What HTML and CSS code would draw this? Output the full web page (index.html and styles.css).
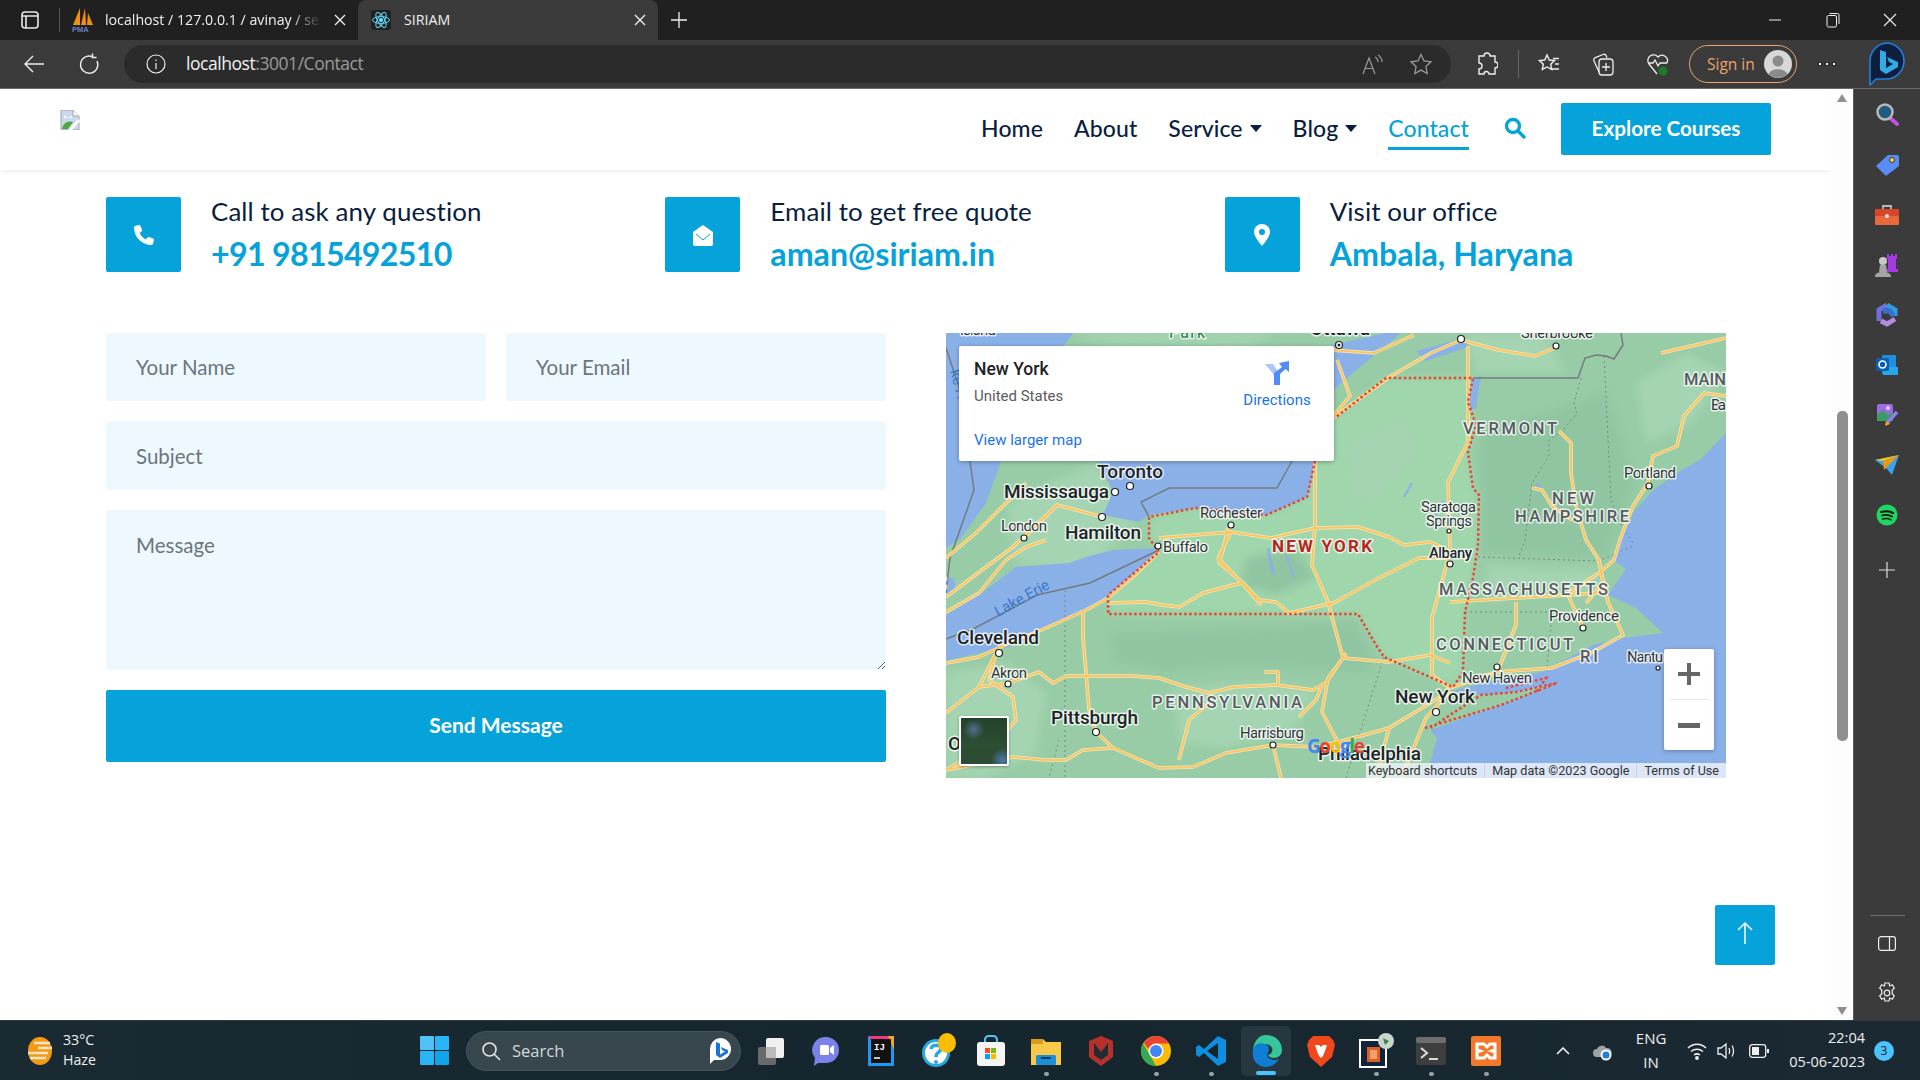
FILE: index.html
```html
<!DOCTYPE html>
<html lang="en">
<head>
<meta charset="utf-8">
<title>SIRIAM</title>
<link rel="stylesheet" href="styles.css">
</head>
<body>
<div class="tabstrip">
  <div class="tabs-btn"><svg width="20" height="20" viewBox="0 0 20 20" fill="none" stroke="#e8e8e8" stroke-width="1.6"><rect x="2" y="2" width="16" height="16" rx="3"/><path d="M2 6h16M6 6v12"/></svg></div>
  <div class="tab">
    <svg class="fav" width="22" height="26" viewBox="0 0 22 26"><path d="M1 18 8 1v17zM9 18l4-17 1 17zM15 18l1-12 5 12z" fill="#f29111"/><text class="pma" x="0" y="25">PMA</text></svg>
    <span class="tab-title fade">localhost / 127.0.0.1 / avinay / se</span>
    <svg class="tab-x" width="12" height="12" viewBox="0 0 12 12" stroke="#eee" stroke-width="1.4"><path d="M1 1l10 10M11 1 1 11"/></svg>
  </div>
  <div class="tab active">
    <svg class="fav" width="20" height="20" viewBox="0 0 20 20" fill="none" stroke="#61dafb"><rect width="20" height="20" rx="3" fill="#222" stroke="none"/><ellipse cx="10" cy="10" rx="8.5" ry="3.4"/><ellipse cx="10" cy="10" rx="8.5" ry="3.4" transform="rotate(60 10 10)"/><ellipse cx="10" cy="10" rx="8.5" ry="3.4" transform="rotate(120 10 10)"/><circle cx="10" cy="10" r="1.7" fill="#61dafb"/></svg>
    <span class="tab-title">SIRIAM</span>
    <svg class="tab-x" width="12" height="12" viewBox="0 0 12 12" stroke="#eee" stroke-width="1.4"><path d="M1 1l10 10M11 1 1 11"/></svg>
  </div>
  <div class="new-tab"><svg width="18" height="18" viewBox="0 0 18 18" stroke="#eee" stroke-width="1.3"><path d="M9 1v16M1 9h16"/></svg></div>
  <div class="win-btns">
    <div class="win-btn"><svg width="14" height="14" viewBox="0 0 14 14" stroke="#eee"><path d="M1 7h12"/></svg></div>
    <div class="win-btn"><svg width="14" height="16" viewBox="0 0 14 16" fill="none" stroke="#eee"><rect x="1" y="3.5" width="9.5" height="11.5" rx="1.5"/><path d="M3.5 1.5h8a1.5 1.5 0 0 1 1.5 1.5v9"/></svg></div>
    <div class="win-btn"><svg width="14" height="14" viewBox="0 0 14 14" stroke="#eee" stroke-width="1.1"><path d="M1 1l12 12M13 1 1 13"/></svg></div>
  </div>
</div>

<div class="toolbar">
  <div class="tool first"><svg width="22" height="20" viewBox="0 0 22 20" fill="none" stroke="#eee" stroke-width="1.4"><path d="M21 10H2M10 2l-8 8 8 8"/></svg></div>
  <div class="tool"><svg width="22" height="22" viewBox="0 0 22 22" fill="none" stroke="#eee" stroke-width="1.4"><path d="M14 3.5A8.6 8.6 0 1 0 19 8M14.500 0.500v4h4"/></svg></div>
  <div class="address">
    <div class="addr-icon"><svg width="20" height="20" viewBox="0 0 20 20" fill="none" stroke="#eee" stroke-width="1.2"><circle cx="10" cy="10" r="9"/><path d="M10 9v6M10 5.500v1.500"/></svg></div>
    <div class="url"><span class="url-host">localhost</span><span class="url-rest">:3001/Contact</span></div>
    <div class="tool narrow"><svg width="22" height="22" viewBox="0 0 22 22" fill="none" stroke="#9a9a9a" stroke-width="1.2"><path d="M2 21 8 5l6 16M4 15.500h8M14 4c2 1 3 3 3 5M17 2c2.500 1.500 4 4 4 7"/></svg></div>
    <div class="tool narrow"><svg width="22" height="22" viewBox="0 0 22 22" fill="none" stroke="#9a9a9a" stroke-width="1.3"><path d="m11 1.500 3 6.400 7 .9-5.100 4.800 1.300 6.900-6.200-3.400-6.200 3.400 1.300-6.900L1 8.800l7-.9z"/></svg></div>
  </div>
  <div class="tool ext"><svg width="22" height="24" viewBox="0 0 22 24" fill="none" stroke="#eee" stroke-width="1.4"><path d="M8 4a3 3 0 0 1 6 0h5v6a3 3 0 0 1 0 6v6h-6a2.500 2.500 0 0 0-5 0H3v-5a3 3 0 0 0 0-6V4z"/></svg></div>
  <div class="tool-sep"></div>
  <div class="tool"><svg width="22" height="24" viewBox="0 0 22 24" fill="none" stroke="#eee" stroke-width="1.4"><path d="m9 3 2.300 5 5.200.6-3.800 3.600 1 5.200L9 15l-4.700 2.400 1-5.200L1.500 8.600 6.700 8zM15 6.500h6M17 12h4M14 17h7"/></svg></div>
  <div class="tool"><svg width="24" height="26" viewBox="0 0 24 26" fill="none" stroke="#eee" stroke-width="1.3"><rect x="8" y="8" width="14" height="16" rx="3"/><path d="M15 12v8M11 16h8M8 21 3 10a2.500 2.500 0 0 1 1.300-3.300L12 3.500a2.500 2.500 0 0 1 3.200 1.300l.8 2"/></svg></div>
  <div class="tool"><svg width="24" height="26" viewBox="0 0 24 26" fill="none" stroke="#eee" stroke-width="1.3"><path d="M11 23 3 13a5.500 5.500 0 0 1 9-7 5.500 5.500 0 0 1 9 6M2 12h5l2-3 3 6 2-3h7"/><circle cx="17" cy="20" r="4.500" fill="#1f7a2a" stroke="none"/></svg></div>
  <div class="signin">
    <span>Sign in</span>
    <svg width="28" height="28" viewBox="0 0 28 28"><circle cx="14" cy="14" r="14" fill="#d8d8d8"/><circle cx="14" cy="11" r="5.500" fill="#8a8a8a"/><path d="M4.500 24a10 7 0 0 1 19 0 14 14 0 0 1-19 0z" fill="#8a8a8a"/></svg>
  </div>
  <div class="tool dots"><svg width="18" height="4" viewBox="0 0 18 4" fill="#f5f5f5"><circle cx="2" cy="2" r="1.800"/><circle cx="9" cy="2" r="1.800"/><circle cx="16" cy="2" r="1.800"/></svg></div>
  <div class="bing-top"><svg width="38" height="44" viewBox="0 0 38 44"><path d="M19 1a18 18 0 0 1 0 36H9l-6 6v-6 -18A18 18 0 0 1 19 1z" fill="#0d1f3c" stroke="#1f7fe0" stroke-width="1.600"/><path d="M13 8l6 2v16l7-4-4-2-2-5 11 5v5l-12 7-6-4z" fill="#33a9e8"/></svg></div>
</div>

<div class="middle">
  <main class="page">
    <header class="nav">
      <svg class="broken" width="20" height="20" viewBox="0 0 20 20"><path d="M1 0h12l6 6v14H1z" fill="#c8d8f0" stroke="#a5a5a5"/><path d="M13 0v6h6" fill="#fff" stroke="#a5a5a5"/><path d="M4 5l4 3 4-2v2H4z" fill="#fff"/><path d="M2 19c1-6 6-9 11-7l-5 7z" fill="#4fa83d"/><path d="M10 20 19 10" stroke="#fff" stroke-width="3"/></svg>
      <nav class="nav-links">
        <a class="nav-link">Home</a>
        <a class="nav-link">About</a>
        <a class="nav-link caret">Service</a>
        <a class="nav-link caret">Blog</a>
        <a class="nav-link current">Contact</a>
        <svg class="nav-search" width="22" height="22" viewBox="0 0 22 22" fill="none" stroke="#06a3da" stroke-width="3.400"><circle cx="9" cy="9" r="6.500"/><path d="m14 14 6 6" stroke-linecap="round"/></svg>
        <a class="explore">Explore Courses</a>
      </nav>
    </header>

    <section class="content">
      <div class="contacts">
        <div class="contact">
          <div class="contact-icon"><svg width="20" height="20" viewBox="0 0 512 512" fill="#fff"><path d="M164.900 24.600c-7.700-18.600-28-28.500-47.400-23.200l-88 24C12.100 30.200 0 46 0 64c0 247.400 200.600 448 448 448 18 0 33.800-12.100 38.600-29.500l24-88c5.300-19.400-4.600-39.700-23.200-47.400l-96-40c-16.300-6.800-35.200-2.100-46.300 11.600L304.700 368C234.300 334.700 177.300 277.700 144 207.300l49.300-40.300c13.700-11.200 18.400-30 11.600-46.300z"/></svg></div>
          <div class="contact-text"><h5 class="contact-label">Call to ask any question</h5><div class="contact-value phone">+91 9815492510</div></div>
        </div>
        <div class="contact">
          <div class="contact-icon"><svg width="22" height="22" viewBox="0 0 22 22"><path d="M11 1 21 8v12a2 2 0 0 1-2 2H3a2 2 0 0 1-2-2V8z" fill="#fff"/><path d="m4 10 7 6 7-6" fill="none" stroke="#06a3da"/></svg></div>
          <div class="contact-text"><h5 class="contact-label">Email to get free quote</h5><div class="contact-value">aman@siriam.in</div></div>
        </div>
        <div class="contact">
          <div class="contact-icon"><svg width="16" height="22" viewBox="0 0 16 22"><path d="M8 0a8 8 0 0 1 8 8c0 4-5 10.500-8 14-3-3.500-8-10-8-14a8 8 0 0 1 8-8z" fill="#fff"/><circle cx="8" cy="8" r="3" fill="#06a3da"/></svg></div>
          <div class="contact-text"><h5 class="contact-label">Visit our office</h5><div class="contact-value">Ambala, Haryana</div></div>
        </div>
      </div>

      <div class="split">
        <form class="form">
          <input class="field" type="text" placeholder="Your Name">
          <input class="field" type="email" placeholder="Your Email">
          <input class="field wide" type="text" placeholder="Subject">
          <textarea class="field wide message" placeholder="Message"></textarea>
          <button class="send wide" type="button">Send Message</button>
        </form>

        <div class="map">
          <svg class="map-svg" width="780" height="445" viewBox="0 0 780 445">
            <rect width="780" height="445" fill="#98cca6"/>
            <g class="tones">
              <path class="tone-ny" d="M440 45H527L522 69 530 92 522 119 527 155 533 162 532 212 527 245 519 279 517 339 507 354 438 324 430 312 412 281H162V262L213 219 203 205V184L249 175 320 182 361 164 369 128 389 85z"/>
              <path class="tone-dark" d="M165 300 300 295 410 290 430 325 420 340 300 332 220 338 170 330z"/>
              <path class="tone-dark" d="M535 100 660 60 690 150 660 225 535 220z"/>
              <path class="tone-light" d="M60 170 150 130 190 190 140 240 70 230z"/>
              <path class="tone-light" d="M225 355 330 350 370 358 350 395 280 415 235 410z"/>
              <path class="tone-light" d="M0 340 60 330 100 360 90 420 40 445H0z"/>
              <path class="tone-light" d="M400 110 460 85 470 120 430 170 405 165z"/>
              <path class="tone-light" d="M690 50 740 20 780 40 745 90 700 110z"/>
              <path class="tone-light" d="M120 0H330L300 12 160 10z"/>
              <path class="tone-light" d="M520 0 600 0 620 40 530 40z"/>
              <path class="tone-dark" d="M300 225 350 215 370 245 330 262 295 252z"/>
              <path class="tone-light" d="M540 232 650 237 655 258 540 265z"/>
            </g>
            <path class="water" d="M0 0H127L118 13V128H55L40 170 15 205 0 215z"/>
            <path class="water" d="M152 128H370L361 164 320 182 249 175 203 182 193 189 157 182 167 159z"/>
            <path class="water" d="M0 282 33 262 70 234 123 230 140 224 167 217 213 215V220L187 244 160 264 140 277 100 295 63 314 33 320 0 328z"/>
            <path class="water" d="M0 245H8L10 258 0 262z"/>
            <path class="water" d="M780 100 754 127 731 140 707 157 687 180 674 207 668 228 680 236 662 262 690 275 717 300 677 305 647 312 596 339 560 345 504 358 535 362 570 359 611 350 555 372 484 397 491 405 484 430 476 445H780z"/>
            <path class="water" d="M385 12 440 0 455 0 395 50 385 60z"/>
            <path class="water" d="M470 18 518 5 522 14 480 28z"/>
            <path class="water" d="M526 48 535 42 530 75 520 80z"/>
            <path class="lake" d="M322 215l4 25 2 0zM340 222l8 22zM497 168l-8 16M590 150l7 8M466 150l-8 14"/>
            <g class="state-line">
              <path d="M635 45 628 70 631 80 616 98 603 107V123L586 150 579 207 573 223"/>
              <path d="M658 23 665 167 674 190 687 210"/>
              <path d="M532 224 653 228 687 213"/>
              <path d="M519 279H606L601 335"/>
              <path d="M119 257V445M113 407 103 445M163 262V282"/>
              <path d="M438 324 420 380 400 445"/>
            </g>
            <g class="intl-line">
              <path d="M527 45H632L639 25 650 22 660 23 668 26 677 12 675 0"/>
              <path d="M346 128 331 155H223L195 169 203 184"/>
              <path d="M213 217 144 250 91 262 29 295 0 306"/>
              <path d="M0 15 15 60 24 128 28 157 4 225 0 260"/>
            </g>
            <defs>
              <g id="roads">
                <polyline points="213,219 187,244 162,265 140,277 100,295 63,310 33,324 0,330"/>
                <polyline points="162,270 200,269 217,272 233,274 257,260 287,252 297,250 313,267 330,269 343,280 387,270"/>
                <polyline points="297,250 273,230 277,217 282,195"/>
                <polyline points="213,205 285,199 325,205 369,195 412,194 443,204 458,212 484,209 504,218"/>
                <polyline points="504,225 473,225 433,245 402,262 384,272"/>
                <polyline points="369,128 369,192 366,232 382,269 397,325 382,345 376,379 397,419"/>
                <polyline points="522,13 522,67 522,109 502,149 504,219 486,285 486,342 504,355"/>
                <polyline points="384,87 445,43 485,20 515,7 552,17 589,23 613,13"/>
                <polyline points="391,27 404,63 384,87"/>
                <polyline points="384,17 428,20 468,2"/>
                <polyline points="613,98 625,110 625,140 630,173 640,207 653,227 657,250 640,270"/>
                <polyline points="586,155 596,157 606,173 626,187"/>
                <polyline points="780,63 758,60 738,83 731,113 707,123 702,150 687,173 674,207 668,227 653,240 620,262"/>
                <polyline points="504,269 570,265 622,262 662,259"/>
                <polyline points="504,355 550,339 606,335 647,319 677,302 662,269 652,225"/>
                <polyline points="570,269 570,292 553,335"/>
                <polyline points="637,295 622,262"/>
                <polyline points="0,380 33,354 63,350 93,339 107,350 120,343 187,343 213,345 240,354 263,360 287,354 330,352 367,357 380,350 400,320"/>
                <polyline points="318,339 332,339 332,352"/>
                <polyline points="137,277 137,304 140,340 143,377 150,399 167,415"/>
                <polyline points="0,437 67,424 100,427 120,427 137,417 167,415 213,435 247,434 280,420 327,412 370,414 400,407 443,395 504,358"/>
                <polyline points="233,427 243,387 263,370"/>
                <polyline points="353,384 370,367 377,350"/>
                <polyline points="50,320 43,347 67,364 70,387 53,407 0,437"/>
                <polyline points="0,279 33,260 60,227 80,214 100,207"/>
                <polyline points="0,264 40,234 67,214 111,172 157,184"/>
                <polyline points="397,325 443,329 484,322 504,330"/>
                <polyline points="272,225 295,249 315,272"/>
                <polyline points="285,199 272,225"/>
                <polyline points="327,412 335,445"/>
                <polyline points="0,225 30,200 80,150"/>
                <polyline points="78,205 111,172"/>
                <polyline points="715,20 780,5"/>
                <polyline points="504,358 480,385 455,445"/>
                <polyline points="443,395 430,445"/>
                <polyline points="33,354 50,320"/>
              </g>
            </defs>
            <use href="#roads" class="road-case"/>
            <use href="#roads" class="road-core"/>
            <path class="ny-line" d="M369 128 361 164 320 182 249 175 203 184V205L213 219 162 262V281H412L430 312 438 324 507 354 517 339 519 279 527 245 532 212 533 162 527 155 522 119 530 92 522 69 527 45H440L389 85"/>
            <path class="ny-line" d="M479 395 555 372 611 350 570 359 535 362 504 382 485 395M560 355 600 345 590 360"/>
            <g class="labels">
              <text class="lab" x="14" y="2" textLength="36">Island</text>
              <text class="lab green" x="223" y="5" textLength="36">Park</text>
              <text class="lab big" x="364" y="2" textLength="60">Ottawa</text>
              <text class="lab" x="575" y="5" textLength="72">Sherbrooke</text>
              <text class="lab big" x="151" y="145" textLength="66">Toronto</text>
              <text class="lab big" x="58" y="165" textLength="105">Mississauga</text>
              <text class="lab big" x="119" y="206" textLength="76">Hamilton</text>
              <text class="lab" x="55" y="198" textLength="46">London</text>
              <text class="lab" x="254" y="185" textLength="62">Rochester</text>
              <text class="lab" x="217" y="219" textLength="45">Buffalo</text>
              <text class="lab" x="475" y="179" textLength="55">Saratoga</text>
              <text class="lab" x="480" y="193" textLength="46">Springs</text>
              <text class="lab mid" x="483" y="225" textLength="43">Albany</text>
              <text class="lab big" x="11" y="311" textLength="82">Cleveland</text>
              <text class="lab" x="45" y="345" textLength="36">Akron</text>
              <text class="lab big" x="105" y="391" textLength="87">Pittsburgh</text>
              <text class="lab" x="294" y="405" textLength="64">Harrisburg</text>
              <text class="lab big" x="449" y="370" textLength="80">New York</text>
              <text class="lab big" x="372" y="427" textLength="103">Philadelphia</text>
              <text class="lab" x="516" y="350" textLength="70">New Haven</text>
              <text class="lab" x="603" y="288" textLength="70">Providence</text>
              <text class="lab" x="678" y="145" textLength="52">Portland</text>
              <text class="lab" x="681" y="329" textLength="36">Nantu</text>
              <text class="lab" x="765" y="77" textLength="15">Ba</text>
              <text class="lab big" x="-6" y="255">t</text>
              <text class="lab big" x="2" y="417">O</text>
              <text class="lab red" x="326" y="219" textLength="100">NEW YORK</text>
              <text class="lab st" x="517" y="101" textLength="94">VERMONT</text>
              <text class="lab st" x="606" y="171" textLength="42">NEW</text>
              <text class="lab st" x="569" y="189" textLength="114">HAMPSHIRE</text>
              <text class="lab st" x="493" y="262" textLength="169">MASSACHUSETTS</text>
              <text class="lab st" x="490" y="317" textLength="137">CONNECTICUT</text>
              <text class="lab st" x="634" y="329" textLength="18">RI</text>
              <text class="lab st" x="206" y="375" textLength="150">PENNSYLVANIA</text>
              <text class="lab st" x="738" y="52">MAIN</text>
              <text class="lab blue" transform="translate(52 284) rotate(-29)" textLength="60">Lake Erie</text>
              <text class="lab blue" transform="translate(4 38) rotate(75)">ke H</text>
              <text class="logo-g" x="361" y="420" textLength="58"><tspan class="g-b">G</tspan><tspan class="g-r">o</tspan><tspan class="g-y">o</tspan><tspan class="g-b">g</tspan><tspan class="g-gr">l</tspan><tspan class="g-r">e</tspan></text>
            </g>
            <g class="dots">
              <circle cx="393" cy="12" r="3.500"/><circle cx="515" cy="6" r="3.500"/><circle cx="610" cy="13" r="3"/><circle cx="184" cy="153" r="3.500"/><circle cx="169" cy="159" r="3.500"/><circle cx="156" cy="184" r="3.500"/><circle cx="78" cy="205" r="3"/><circle cx="212" cy="213" r="3"/><circle cx="285" cy="192" r="3"/><circle cx="504" cy="231" r="3"/><circle cx="503" cy="198" r="2"/><circle cx="703" cy="153" r="3"/><circle cx="637" cy="295" r="3"/><circle cx="551" cy="334" r="3"/><circle cx="490" cy="379" r="3.500"/><circle cx="53" cy="320" r="3.500"/><circle cx="62" cy="351" r="3"/><circle cx="150" cy="399" r="3.500"/><circle cx="327" cy="412" r="3"/><circle cx="712" cy="335" r="2"/>
            </g>
            <circle class="dot-core" cx="393" cy="12" r="1.500"/>
          </svg>

          <div class="map-card">
            <div class="map-card-main">
              <div class="place">New York</div>
              <div class="country">United States</div>
            </div>
            <a class="directions">
              <svg width="24" height="24" viewBox="0 0 24 24"><path d="M0 3h8l7 10v11H9V14z" fill="#a9c7fa"/><path d="M9 24V12L17 6 14 2 24 0v11l-3.500-3-5.500 5v11z" fill="#4f8cf5"/></svg>
              <span>Directions</span>
            </a>
            <a class="larger">View larger map</a>
          </div>

          <div class="map-thumb"></div>

          <div class="zoom-box">
            <div class="zoom-btn"><svg width="24" height="24" viewBox="0 0 24 24" fill="#666"><path d="M10 1h4v9h9v4h-9v9h-4v-9H1v-4h9z"/></svg></div>
            <div class="zoom-sep"></div>
            <div class="zoom-btn"><svg width="24" height="24" viewBox="0 0 24 24" fill="#666"><path d="M1 10h22v5H1z"/></svg></div>
          </div>

          <div class="attrib">
            <span>Keyboard shortcuts</span><span>Map data ©2023 Google</span><span>Terms of Use</span>
          </div>
        </div>
      </div>
    </section>

    <a class="to-top"><svg width="18" height="24" viewBox="0 0 18 24" fill="none" stroke="#fff" stroke-width="1.500"><path d="M9 23V2M2 9l7-7 7 7"/></svg></a>
  </main>

  <div class="scrollbar">
    <i class="arrow-up"></i>
    <div class="thumb"></div>
    <i class="arrow-down"></i>
  </div>

  <aside class="sidebar">
    <div class="side-slot"><svg width="24" height="24" viewBox="0 0 24 24"><path d="m14 14 8 7" stroke="#c94fe0" stroke-width="4" stroke-linecap="round"/><circle cx="10" cy="9" r="7.500" fill="#1f5c84" stroke="#b8b8b8" stroke-width="2.500"/></svg></div>
    <div class="side-slot"><svg width="24" height="24" viewBox="0 0 24 24"><path d="M13 2h9a2 2 0 0 1 2 2v9L11 23 1 13z" fill="#5a8cf5"/><circle cx="17" cy="7" r="2.500" fill="#ffd23c" stroke="#333"/></svg></div>
    <div class="side-slot"><svg width="24" height="22" viewBox="0 0 24 22"><path d="M8 6V2h8v4" fill="none" stroke="#bbb" stroke-width="1.800"/><rect y="5" width="24" height="7" fill="#d8452c"/><rect y="12" width="24" height="9" rx="1" fill="#e9683c"/><circle cx="12" cy="12" r="2" fill="#ddd"/></svg></div>
    <div class="side-slot"><svg width="24" height="24" viewBox="0 0 24 24"><path d="M12 6h10v-5h-2v2h-2V1h-2v2h-2V1h-2zM13 6h8v10h2v3H11v-3h2z" fill="#a43be0"/><circle cx="8" cy="8" r="4" fill="#c8c8c8"/><path d="M5 12h6l1 7H4zM0 24c0-3 2-5 8-5s8 2 8 5z" fill="#a5a5a5"/></svg></div>
    <div class="side-slot"><svg width="22" height="24" viewBox="0 0 22 24" fill="none" stroke-width="5"><path d="M3 18V7l8-5" stroke="#6f6fe0"/><path d="M11 2l8 5v6" stroke="#2f9ce0"/><path d="M19 16l-8 5-6-3" stroke="#b58ae0"/><path d="M7 8h7l3 5" stroke="#3a6fd0"/></svg></div>
    <div class="side-slot"><svg width="22" height="22" viewBox="0 0 22 22"><rect x="6" y="1" width="14" height="19" rx="1" fill="#1f8fe0"/><rect x="7" y="13" width="15" height="8" fill="#28a8ea"/><rect y="4" width="13" height="13" rx="1.500" fill="#0a5fb0"/><circle cx="6.500" cy="10.500" r="3.500" fill="none" stroke="#fff" stroke-width="1.600"/></svg></div>
    <div class="side-slot"><svg width="24" height="24" viewBox="0 0 24 24"><rect x="2" y="1" width="16" height="17" rx="2" fill="#a06ae0"/><path d="M2 12l6-5 5 5 5-3v9H2z" fill="#3c9c68"/><circle cx="13" cy="5" r="2" fill="#e6d0ff"/><path d="M12 20 22 9" stroke="#8f7cf0" stroke-width="3.500"/><path d="M11 18l4 3-5 2z" fill="#f2a51a"/></svg></div>
    <div class="side-slot"><svg width="24" height="20" viewBox="0 0 24 20"><path d="M0 5 24 0 17 20 11 13z" fill="#3aa0f0"/><path d="M0 5l24-5-16 6z" fill="#f5c518"/><path d="M8 6l1 9 2-2 13-13z" fill="#e59b12"/></svg></div>
    <div class="side-slot"><svg width="22" height="22" viewBox="0 0 22 22" fill="none" stroke="#191414" stroke-linecap="round"><circle cx="11" cy="11" r="10.500" fill="#1ed760" stroke="none"/><path d="M5 8c4-1 9-1 12 1" stroke-width="2.200"/><path d="M6 11.500c3-1 7-.8 10 1" stroke-width="1.800"/><path d="M6.500 15c3-.8 6-.5 8.500.8" stroke-width="1.500"/></svg></div>
    <div class="side-slot plus"><svg width="16" height="16" viewBox="0 0 16 16" stroke="#ddd" stroke-width="1.200"><path d="M8 0v16M0 8h16"/></svg></div>
    <div class="side-bottom">
      <div class="side-sep"></div>
      <div class="side-slot"><svg width="18" height="15" viewBox="0 0 18 15" fill="none" stroke="#eee" stroke-width="1.200"><rect x=".6" y=".6" width="16.800" height="13.800" rx="2.500"/><path d="M11.500 .6v13.800"/></svg></div>
      <div class="side-slot"><svg width="20" height="22" viewBox="0 0 20 22" fill="none" stroke="#eee" stroke-width="1.200"><path d="M8 1h4l.7 3 2.600-1.200 2 3.400-2.200 2a7 7 0 0 1 0 3.600l2.200 2-2 3.400-2.600-1.200-.7 3H8l-.7-3-2.600 1.200-2-3.400 2.200-2a7 7 0 0 1 0-3.600l-2.200-2 2-3.400L7.300 4z"/><circle cx="10" cy="11" r="2.800"/></svg></div>
    </div>
  </aside>
</div>

<footer class="taskbar">
  <div class="weather">
    <svg width="30" height="30" viewBox="0 0 30 30"><ellipse cx="16" cy="15" rx="12" ry="14" fill="#f59a12"/><g stroke="#f2e5c8" stroke-width="2.500"><path d="M10 7h16M14 12h14M4 17h20M6 22h16"/></g></svg>
    <div class="weather-text"><span>33°C</span><span>Haze</span></div>
  </div>
  <svg class="win-logo" width="29" height="29" viewBox="0 0 29 29"><rect width="14" height="14" fill="#4fc3f7" rx="1"/><rect x="15" width="14" height="14" fill="#29b6f6" rx="1"/><rect y="15" width="14" height="14" fill="#29b6f6" rx="1"/><rect x="15" y="15" width="14" height="14" fill="#0ea5e9" rx="1"/></svg>
  <div class="search-pill">
    <svg width="20" height="20" viewBox="0 0 20 20" fill="none" stroke="#e5e5e5" stroke-width="1.600"><circle cx="8.500" cy="8.500" r="6.500"/><path d="m13 13 6 6"/></svg>
    <span>Search</span>
    <svg class="pill-b" width="24" height="28" viewBox="0 0 24 28"><path d="M12 1a11 11 0 0 1 0 22H6l-4 4V12A11 11 0 0 1 12 1z" fill="#fff"/><path d="M8 5l4 1.500v11l5-3-3-1.500-1-3 7 3v3l-8 5-4-3z" fill="#1c74d8"/></svg>
  </div>
  <div class="apps">
    <div class="app"><svg width="30" height="30" viewBox="0 0 30 30"><rect x="2" y="11" width="18" height="18" rx="2" fill="#6a6a6a"/><rect x="10" y="2" width="18" height="20" rx="2" fill="#f0f0f0"/><rect x="10" y="11" width="10" height="11" fill="#bbb"/></svg></div>
    <div class="app"><svg width="28" height="30" viewBox="0 0 28 30"><path d="M14 1a13 13 0 0 1 0 26H6l-4 3 1-8A13 13 0 0 1 14 1z" fill="#7b83eb"/><rect x="8" y="9" width="9" height="10" rx="1.500" fill="#fff"/><path d="m18 12 4-3v10l-4-3z" fill="#fff"/></svg></div>
    <div class="app"><svg width="26" height="30" viewBox="0 0 26 30"><path d="M0 0h26v30H0z" fill="#2196f3"/><path d="M0 0h26L16 8H6z" fill="#ec3a7c"/><path d="M20 0h6v14z" fill="#f5a623"/><rect x="3" y="3" width="20" height="24" fill="#111"/><text class="ij" x="6" y="14">IJ</text><path d="M6 22h6" stroke="#fff" stroke-width="1.500"/></svg></div>
    <div class="app help"><svg width="34" height="36" viewBox="0 0 34 36"><circle cx="14" cy="20" r="14" fill="#29a8e0"/><circle cx="14" cy="20" r="11" fill="#fff"/><path d="M9 16c1-5 10-5 10 0 0 3-5 3-5 8" fill="none" stroke="#29a8e0" stroke-width="3.500"/><circle cx="14" cy="29" r="2" fill="#29a8e0"/><ellipse cx="25" cy="10" rx="9" ry="10" fill="#fbbc05"/></svg></div>
    <div class="app"><svg width="30" height="32" viewBox="0 0 30 32"><path d="M9 8V4a4 4 0 0 1 4-3h4a4 4 0 0 1 4 3v4" fill="none" stroke="#4fc3f7" stroke-width="2"/><rect x="1" y="7" width="28" height="24" rx="3" fill="#f4f4f4"/><rect x="9" y="13" width="5" height="5" fill="#f25022"/><rect x="15" y="13" width="5" height="5" fill="#7fba00"/><rect x="9" y="19" width="5" height="5" fill="#00a4ef"/><rect x="15" y="19" width="5" height="5" fill="#ffb900"/></svg></div>
    <div class="app dot"><svg width="32" height="28" viewBox="0 0 32 28"><path d="M1 2h12l3 3h15v23H1z" fill="#f7c948"/><path d="M1 2h12v5H1z" fill="#d99a1c"/><rect x="6" y="18" width="20" height="10" rx="1.500" fill="#1b8ed6"/><rect x="11" y="20" width="10" height="2" fill="#0b3f6b"/></svg></div>
    <div class="app"><svg width="26" height="30" viewBox="0 0 26 30"><path d="M1 5 13 0l12 5v16L13 30 1 21z" fill="#b7312c"/><path d="M6 7v12l7 5 7-5V7l-7 9z" fill="#202d35"/></svg></div>
    <div class="app dot"><svg width="30" height="30" viewBox="0 0 30 30"><circle cx="15" cy="15" r="15" fill="#fbbc05"/><path d="M15 0a15 15 0 0 1 13 7.500H15l-8 5L3 7A15 15 0 0 1 15 0z" fill="#ea4335"/><path d="M2 7.500 9 19l6 11A15 15 0 0 1 2 7.500z" fill="#34a853"/><circle cx="15" cy="15" r="7.500" fill="#fff"/><circle cx="15" cy="15" r="6" fill="#4285f4"/></svg></div>
    <div class="app dot"><svg width="30" height="30" viewBox="0 0 30 30"><path d="M22 0 30 4v22l-8 4-14-13-5 4-3-2V11l3-2 5 4z" fill="#0e8ee0"/><path d="M22 7v16L11 15z" fill="#17242c"/></svg></div>
    <div class="app active-app"><svg width="32" height="32" viewBox="0 0 32 32"><path d="M16 0c9 0 16 6 16 15 0 5-4 8-8 8-3 0-5-1-6-3 4-1 5-4 4-7-2-5-13-6-19 2C4 6 9 0 16 0z" fill="#35c69a"/><path d="M3 15C5 7 14 7 18 11c2 3 0 7-1 9 1 5 8 6 12 4-3 5-8 8-13 8C7 32 1 24 3 15z" fill="#0f7fd6"/></svg><b></b></div>
    <div class="app"><svg width="28" height="32" viewBox="0 0 28 32"><path d="M6 1h16l4 4 2 5-3 12-11 10L3 22 0 10l2-5z" fill="#f1471d"/><path d="M8 10h4l2 2 2-2h4l-2 6-2 5-2 2-2-2-2-5z" fill="#fff"/></svg></div>
    <div class="app dot badge-app"><svg width="36" height="36" viewBox="0 0 36 36"><rect x="1" y="6" width="28" height="29" fill="#fff"/><rect x="3" y="8" width="24" height="25" fill="#14233c"/><rect x="9" y="14" width="13" height="15" fill="#d9622b"/><rect x="12" y="17" width="7" height="9" fill="#f5a06b"/><circle cx="28" cy="8" r="8" fill="#c9d6cc"/><path d="M25 5l6 3-4 4z" fill="#3a7f4c"/></svg></div>
    <div class="app dot"><svg width="30" height="28" viewBox="0 0 30 28"><rect width="30" height="28" rx="2" fill="#3e3e3e"/><rect width="30" height="6" rx="2" fill="#6e6e6e"/><path d="m5 11 6 5-6 5" fill="none" stroke="#ddd" stroke-width="2"/><path d="M13 22h9" stroke="#ddd" stroke-width="2"/></svg></div>
    <div class="app dot"><svg width="30" height="30" viewBox="0 0 30 30"><rect width="30" height="30" rx="2" fill="#f4782c"/><path d="M6 8h7l3 3 3-3h5v6l-3 1 3 1v6h-5l-3-3-3 3H6v-6l3-1-3-1z" fill="none" stroke="#fff" stroke-width="3"/></svg></div>
  </div>
  <div class="tray">
    <svg class="tray-up" width="14" height="8" viewBox="0 0 14 8" fill="none" stroke="#eee" stroke-width="1.600"><path d="m1 7 6-6 6 6"/></svg>
    <svg class="tray-cloud" width="20" height="20" viewBox="0 0 20 20"><path d="M5 16a4 4 0 0 1 0-8 5 5 0 0 1 9-1 4 4 0 0 1 2 9z" fill="#9ea3a8"/><circle cx="14" cy="14" r="5.500" fill="#fff"/><circle cx="14" cy="14" r="3.500" fill="#1f7fd8"/></svg>
    <div class="lang"><span>ENG</span><span>IN</span></div>
    <svg class="tray-wifi" width="20" height="18" viewBox="0 0 20 18" fill="none" stroke="#eee" stroke-width="1.500"><path d="M1 6c5-5 13-5 18 0M4 9.500c3.500-3 8.500-3 12 0M7 13c2-1.500 4-1.500 6 0"/><circle cx="10" cy="16" r="1.200" fill="#eee"/></svg>
    <svg class="tray-vol" width="18" height="18" viewBox="0 0 18 18" fill="none" stroke="#eee" stroke-width="1.300"><path d="M1 6h3l5-4v14l-5-4H1zM12 6c1 2 1 4 0 6M15 3.500c2 3 2 8 0 11"/></svg>
    <svg class="tray-bat" width="20" height="14" viewBox="0 0 20 14"><rect x=".7" y=".7" width="16" height="12.600" rx="2.500" fill="none" stroke="#eee" stroke-width="1.300"/><rect x="3" y="3" width="7" height="8" fill="#eee"/><rect x="18" y="5" width="2" height="4" fill="#eee"/></svg>
    <div class="clock"><span>22:04</span><span>05-06-2023</span></div>
    <div class="notif">3</div>
  </div>
</footer>
</body>
</html>
```

FILE: styles.css
```css
* { box-sizing: border-box; }
html, body { margin: 0; padding: 0; height: 1080px; overflow: hidden; }
body { width: 1920px; display: flex; flex-direction: column; font-family: "Open Sans", "Noto Sans", sans-serif; background: #fff; }
svg { display: block; flex: none; }
a { text-decoration: none; color: inherit; }

/* browser chrome */
.tabstrip { height: 40px; flex: none; background: #202020; display: flex; color: #eee; font-size: 14.2px; }
.tabs-btn { width: 60px; height: 40px; display: flex; align-items: center; padding-left: 20px; }
.tabs-btn::after { content: ""; width: 1px; height: 24px; background: #555; margin-left: 19px; }
.tab { width: 298px; height: 40px; display: flex; align-items: center; padding-left: 12px; border-radius: 8px 8px 0 0; }
.tab.active { background: #3b3b3b; width: 300px; padding-left: 13px; }
.fav { margin-right: 11px; }
.tab.active .fav { margin-right: 13px; }
.tab-title { flex: 1; white-space: nowrap; overflow: hidden; color: #f0f0f0; padding-bottom: 2px; }
.fade { -webkit-mask-image: linear-gradient(90deg, #000 85%, transparent); mask-image: linear-gradient(90deg, #000 85%, transparent); }
.tab-x { margin: 0 12px; }
.pma { font: 700 7.5px "Liberation Sans", sans-serif; fill: #6a7fc0; }
.new-tab { width: 42px; height: 40px; display: flex; align-items: center; justify-content: center; }
.win-btns { margin-left: auto; display: flex; padding-right: 1px; }
.win-btn { width: 57.5px; height: 40px; display: flex; align-items: center; justify-content: center; }

.toolbar { height: 49px; flex: none; background: #3b3b3b; border-bottom: 1px solid #6a6a6a; display: flex; align-items: center; padding-left: 7px; }
.tool { width: 54.5px; height: 38px; display: flex; align-items: center; justify-content: center; flex: none; }
.tool.narrow { width: 49px; }
.tool.ext { margin-left: 9px; }
.tool-sep { width: 1px; height: 28px; background: #666; margin: 0 3px; flex: none; }
.address { width: 1327px; height: 38px; margin-left: 8px; background: #2b2b2b; border-radius: 19px; display: flex; align-items: center; padding-right: 6px; flex: none; }
.addr-icon { width: 62px; display: flex; justify-content: center; padding-left: 2px; flex: none; }
.url { flex: 1; font-size: 17.5px; letter-spacing: -.45px; padding-bottom: 2px; }
.url-host { color: #f2f2f2; }
.url-rest { color: #9b9b9b; }
.signin { width: 108px; height: 38px; border: 1px solid #e9a46b; border-radius: 19px; display: flex; align-items: center; justify-content: space-between; padding: 0 4px 0 17px; color: #e9a46b; font-size: 15.5px; margin-left: 4px; flex: none; }
.tool.dots { margin-left: 3px; }
.bing-top { margin-left: 12px; }

/* middle */
.middle { height: 931px; flex: none; display: flex; position: relative; }
.page { width: 1831px; flex: none; position: relative; overflow: hidden; background: #fff; font-family: Lato, "Open Sans", sans-serif; color: #091e3e; }
.nav { height: 81px; display: flex; align-items: center; justify-content: space-between; padding: 0 60px 1px; background: #fff; box-shadow: 0 1px 6px rgba(0, 0, 0, .09); position: relative; }
.broken { margin-top: -19px; }
.nav-links { display: flex; align-items: center; gap: 31px; }
.nav-link { font-size: 23px; line-height: 34px; padding-bottom: 2px; position: relative; letter-spacing: .1px; font-weight: 500; }
.caret { display: flex; align-items: center; gap: 7px; }
.caret::after { content: ""; border: 6px solid transparent; border-top: 7px solid #091e3e; border-bottom: 0; width: 0; height: 0; margin-top: 1px; }
.current { color: #06a3da; }
.current::after { content: ""; position: absolute; left: 0; right: 0; bottom: -3px; height: 3px; background: #06a3da; }
.nav-search { margin-left: 4px; margin-top: -3px; }
.explore { width: 210px; height: 52px; margin-left: 4px; padding-bottom: 2px; background: #06a3da; color: #fff; border-radius: 2px; display: flex; align-items: center; justify-content: center; font-size: 20.7px; font-weight: 700; }

.content { padding: 27px 105px 0 106px; }
.contacts { display: grid; grid-template-columns: repeat(3, 1fr); column-gap: 58px; }
.contact { display: flex; gap: 30px; }
.contact-icon { width: 75px; height: 75px; background: #06a3da; border-radius: 2px; display: flex; align-items: center; justify-content: center; flex: none; }
.contact-label { margin: -1px 0 0; font-size: 25.9px; line-height: 30px; font-weight: 400; letter-spacing: .1px; color: #091e3e; }
.contact-value { margin-top: 8px; font-size: 32.2px; line-height: 40px; font-weight: 700; color: #06a3da; white-space: nowrap; }
.phone { letter-spacing: -.7px; }

.split { display: grid; grid-template-columns: 780px 780px; column-gap: 60px; margin-top: 59px; }
.form { display: grid; grid-template-columns: 380px 380px; column-gap: 20px; row-gap: 20px; align-content: start; }
.field { height: 68px; width: 100%; border: 0; outline: 0; background: #eef9ff; border-radius: 2px; padding: 0 30px; font: 400 20.5px Lato, sans-serif; color: #6c757d; }
.field::placeholder { color: #6c757d; opacity: 1; }
.wide { grid-column: 1 / -1; }
.field:nth-child(3) { height: 69px; }
.message { height: 160px; padding-top: 20px; padding-bottom: 20px; display: block; line-height: 30px; }
.send { height: 72px; border: 0; padding: 0 0 3px; background: #06a3da; color: #fff; border-radius: 2px; font: 700 21px Lato, sans-serif; }

/* map */
.map { width: 780px; height: 445px; position: relative; overflow: hidden; }
.map-svg { font-family: Roboto, sans-serif; }
.tones { filter: blur(4px); }
.tone-ny { fill: #a0d6ab; }
.tone-dark { fill: #90c5a2; }
.tone-light { fill: #a4d4b1; }
.water { fill: #8ab0e8; }
.lake { fill: none; stroke: #8ab0e8; stroke-width: 2; }
.state-line path { fill: none; stroke: #7d8589; stroke-width: 1; stroke-dasharray: 2 3; }
.intl-line path { fill: none; stroke: #737b80; stroke-width: 1.5; }
.road-case { fill: none; stroke: #fbe7b4; stroke-width: 3.5; stroke-linejoin: round; }
.road-core { fill: none; stroke: #f6c667; stroke-width: 2; stroke-linejoin: round; }
.ny-line { fill: none; stroke: #ea4335; stroke-width: 2.5; stroke-dasharray: 2.5 2.5; }
.lab { font-size: 15px; fill: #2e3338; paint-order: stroke; stroke: #fff; stroke-width: 3px; stroke-opacity: .75; stroke-linejoin: round; }
.lab.big { font-size: 19px; font-weight: 500; fill: #202428; }
.lab.mid { font-weight: 500; fill: #202428; }
.lab.st { font-size: 16.5px; font-weight: 500; fill: #555b60; }
.lab.red { font-size: 17px; font-weight: 700; fill: #b8271c; }
.lab.blue { font-size: 15px; fill: #3a78c8; stroke-opacity: 0; }
.lab.green { font-size: 16px; fill: #19803c; }
.logo-g { font: 700 19px "Open Sans", sans-serif; }
.g-b { fill: #4285f4; }
.g-r { fill: #ea4335; }
.g-y { fill: #fbbc05; }
.g-gr { fill: #34a853; }
.dots circle { fill: #fff; stroke: #222; stroke-width: 1.2; }
.dot-core { fill: #222; }

.map-card { position: absolute; left: 13px; top: 13px; width: 375px; height: 115px; background: #fff; border-radius: 2px; box-shadow: 0 1px 4px rgba(0, 0, 0, .3); font-family: Roboto, sans-serif; }
.map-card-main { padding: 12px 0 0 15px; }
.place { font-size: 17.5px; line-height: 22px; font-weight: 500; color: #202124; }
.country { margin-top: 6px; font-size: 15px; line-height: 20px; color: #5b5b5b; }
.directions { position: absolute; right: 17px; top: 15px; width: 80px; display: flex; flex-direction: column; align-items: center; gap: 6px; color: #1a73e8; font-size: 15px; line-height: 18px; white-space: nowrap; }
.larger { position: absolute; left: 15px; bottom: 11px; color: #1a73e8; font-size: 15px; line-height: 20px; }
.map-thumb { position: absolute; left: 13px; top: 383px; width: 50px; height: 50px; border: 2px solid #fff; border-radius: 2px; background: radial-gradient(circle at 28% 25%, #4e6f8d 0, transparent 22%), radial-gradient(circle at 90% 92%, #4d78a8 0, transparent 20%), linear-gradient(#24422b, #2e4f33 60%, #2c4a35); box-shadow: 0 1px 3px rgba(0, 0, 0, .3); }
.zoom-box { position: absolute; left: 718px; top: 316px; width: 50px; height: 101px; background: #fff; border-radius: 2px; box-shadow: 0 1px 4px rgba(0, 0, 0, .3); }
.zoom-btn { height: 50px; display: flex; align-items: center; justify-content: center; }
.zoom-sep { height: 1px; margin: 0 6px; background: #e6e6e6; }
.attrib { position: absolute; left: 420px; right: 0; bottom: 0; height: 15px; background: rgba(240, 244, 250, .8); display: flex; justify-content: flex-end; font: 12.6px/15px Roboto, sans-serif; color: #333; white-space: nowrap; }
.attrib span { padding: 0 7px; border-left: 1px solid #d6d6d6; }
.attrib span:first-child { border-left: 0; }

.to-top { position: absolute; left: 1715px; top: 816px; width: 60px; height: 60px; background: #06a3da; border-radius: 2px; display: flex; align-items: center; justify-content: center; padding-bottom: 5px; }

/* scrollbar */
.scrollbar { width: 22px; flex: none; background: #fdfdfd; display: flex; flex-direction: column; align-items: center; padding: 5px 0; }
.arrow-up, .arrow-down { width: 0; height: 0; border: 5.5px solid transparent; flex: none; }
.arrow-up { border-bottom: 8px solid #8f8f8f; border-top: 0; }
.arrow-down { border-top: 8px solid #8f8f8f; border-bottom: 0; margin-top: auto; }
.thumb { width: 11px; height: 330px; background: #8f8f8f; border-radius: 5px; margin-top: 309px; flex: none; }

/* sidebar */
.sidebar { width: 67px; flex: none; background: #3b3b3b; border-left: 1px solid #5c5c5c; display: flex; flex-direction: column; padding-top: 1px; }
.side-slot { height: 50px; display: flex; align-items: center; justify-content: center; flex: none; }
.side-slot.plus { margin-top: 5px; }
.side-bottom { margin-top: auto; padding-bottom: 2px; }
.side-sep { height: 1px; width: 35px; background: #6c6c6c; margin: 0 auto 2px; }

/* taskbar */
.taskbar { height: 60px; flex: none; background: linear-gradient(90deg, #192a33, #16262e 50%, #1a2932); border-top: 1px solid #2f3c42; display: flex; align-items: center; color: #f0f0f0; font-family: "Open Sans", "Noto Sans", sans-serif; }
.weather { width: 420px; display: flex; align-items: center; gap: 9px; padding-left: 24px; flex: none; font-size: 14.2px; line-height: 20px; }
.weather-text { display: flex; flex-direction: column; margin-top: -2px; }
.win-logo { margin-right: 17px; }
.search-pill { width: 275px; height: 40px; border-radius: 20px; background: #37474d; border: 1px solid #465459; display: flex; align-items: center; gap: 11px; padding: 0 8px 0 14px; font-size: 16.5px; color: #d4d8da; flex: none; }
.pill-b { margin-left: auto; }
.apps { display: flex; margin-left: 2.5px; flex: none; }
.app { width: 55px; height: 50px; display: flex; align-items: center; justify-content: center; position: relative; flex: none; border-radius: 5px; }
.help svg { margin-left: 6px; }
.dot::after { content: ""; position: absolute; left: 25px; bottom: 0; width: 5px; height: 4px; border-radius: 2px; background: #9aa0a4; }
.active-app { background: #26373f; width: 50px; margin: 0 2.5px; }
.active-app b { position: absolute; left: 15px; bottom: 1px; width: 20px; height: 4px; border-radius: 2px; background: #4cc2ff; }
.tray { display: flex; align-items: center; flex: 1; height: 100%; }
.tray-up { margin-left: 42px; }
.tray-cloud { margin-left: 22.6px; }
.lang { width: 40px; margin-left: 19px; display: flex; flex-direction: column; align-items: center; font-size: 15px; line-height: 24px; flex: none; margin-top: -2px; }
.tray-wifi { margin-left: 15.5px; }
.tray-vol { margin-left: 10px; }
.tray-bat { margin-left: 14px; }
.clock { display: flex; flex-direction: column; align-items: flex-end; margin-left: auto; font-size: 14.5px; line-height: 24px; margin-right: 9px; margin-top: -2px; }
.notif { width: 20px; height: 20px; border-radius: 50%; background: #4cc2ff; color: #12222b; font-size: 12px; display: flex; align-items: center; justify-content: center; margin-right: 26px; flex: none; }
.ij { font: 700 9px "Liberation Mono", monospace; fill: #fff; }
```
